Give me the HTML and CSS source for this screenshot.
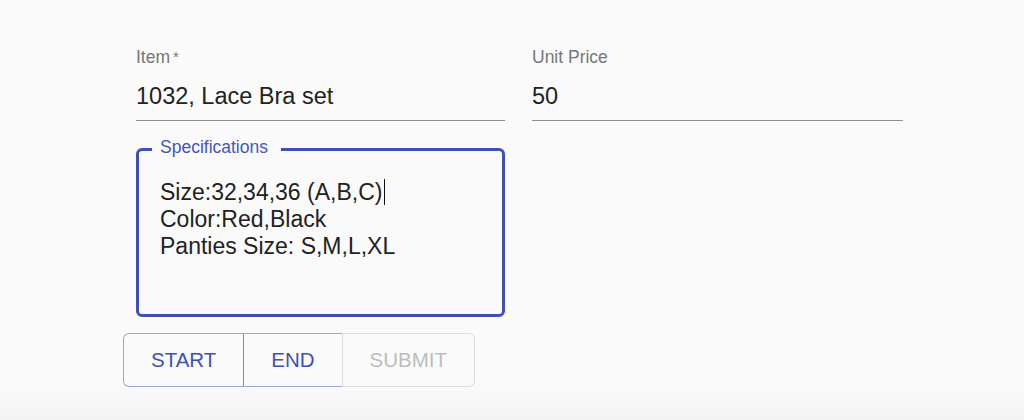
FILE: index.html
```html
<!DOCTYPE html>
<html lang="en">
<head>
<meta charset="utf-8">
<title>Item form</title>
<link rel="stylesheet" href="styles.css">
</head>
<body>
<main class="form">
  <div class="row">
    <div class="field">
      <div class="label">Item<span class="req">*</span></div>
      <div class="value">1032, Lace Bra set</div>
    </div>
    <div class="field">
      <div class="label">Unit Price</div>
      <div class="value">50</div>
    </div>
  </div>
  <fieldset class="specs">
    <legend class="specs-legend">Specifications</legend>
    <div class="specs-text">Size:32,34,36 (A,B,C)<span class="caret"></span>
Color:Red,Black
Panties Size: S,M,L,XL</div>
  </fieldset>
  <div class="btn-group">
    <button class="btn btn-start" type="button">Start</button>
    <button class="btn btn-end" type="button">End</button>
    <button class="btn btn-submit" type="button" disabled>Submit</button>
  </div>
</main>
</body>
</html>
```

FILE: styles.css
```css
html, body {
  margin: 0;
  height: 420px;
}
body {
  background: linear-gradient(to bottom, #fafafa 0, #fafafa 385px, #f3f3f3 420px);
  font-family: "Liberation Sans", Arial, sans-serif;
  overflow: hidden;
}
.form {
  padding: 47px 0 0 136px;
}
.row {
  display: grid;
  grid-template-columns: 369px 371px;
  column-gap: 27px;
}
.label {
  font-size: 17.5px;
  line-height: 20px;
  color: #767676;
  margin-bottom: 15px;
}
.req {
  margin-left: 3px;
  font-size: 15px;
  vertical-align: 1px;
}
.value {
  font-size: 23.5px;
  line-height: 28px;
  color: #222;
  padding-bottom: 10px;
  border-bottom: 1px solid #8e8e8e;
}
.specs {
  box-sizing: border-box;
  width: 369px;
  margin: 16px 0 0;
  padding: 18px 21px 27px;
  border: 3px solid #3f51b5;
  border-radius: 6px;
  min-width: 0;
}
.specs-legend {
  margin-left: -8px;
  padding: 0 13px 4px 8px;
  font-size: 17.5px;
  line-height: 20px;
  color: #4556ba;
}
.specs-text {
  white-space: pre-line;
  font-size: 23px;
  line-height: 27px;
  height: 108px;
  color: #222;
}
.caret {
  display: inline-block;
  width: 1px;
  height: 26px;
  background: #111;
  vertical-align: -5px;
  margin-left: 2px;
}
.btn-group {
  display: flex;
  margin: 16px 0 0 -13px;
}
.btn {
  height: 54px;
  padding: 0 27px;
  font-family: "Liberation Sans", Arial, sans-serif;
  font-size: 20.5px;
  text-transform: uppercase;
  color: #3f51b5;
  background: transparent;
  border: 1px solid #9ca6d9;
  margin: 0;
}
.btn-start {
  border-radius: 6px 0 0 6px;
  border-right-color: #7b88cf;
}
.btn-end {
  border-left: none;
  border-right: none;
}
.btn-submit {
  color: #bdbdbd;
  border-color: #dddddd;
  border-radius: 0 6px 6px 0;
}
```
